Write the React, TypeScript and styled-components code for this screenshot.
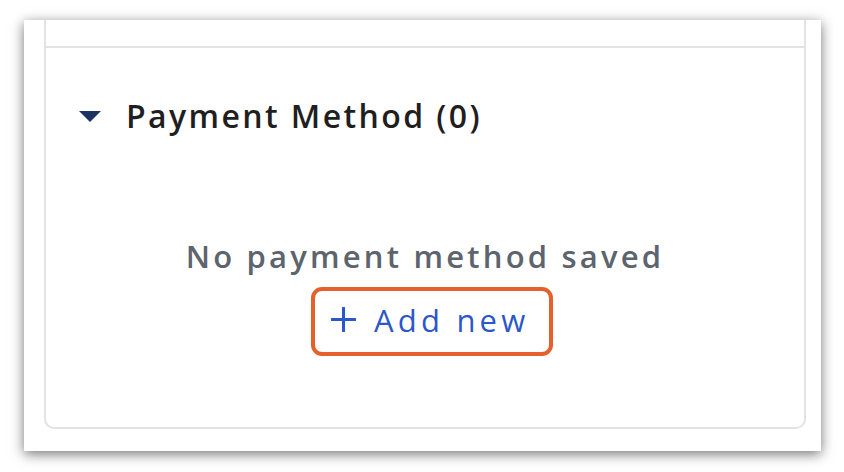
import React from "react";
import styled, { createGlobalStyle } from "styled-components";

const GlobalStyle = createGlobalStyle`
  html, body {
    margin: 0;
    padding: 0;
    background: #ffffff;
  }
  body {
    font-family: "Open Sans", "Noto Sans", sans-serif;
  }
`;

export default function App() {
  return (
    <>
      <GlobalStyle />
      <Page>
        <Frame>
          <Card>
            <PrevSection />
            <Section>
              <Header>
                <Caret viewBox="0 0 22 11" width={22} height={11}>
                  <path d="M0 0 L22 0 L11 11 Z" fill="#1b3360" />
                </Caret>
                <Title>Payment Method (0)</Title>
              </Header>
              <Empty>
                <EmptyText>No payment method saved</EmptyText>
                <AddButton type="button">
                  <svg width="25" height="25" viewBox="0 0 25 25">
                    <path
                      d="M12.5 1 V24 M1 12.5 H24"
                      stroke="#2b57c9"
                      strokeWidth="3"
                      strokeLinecap="round"
                    />
                  </svg>
                  <span>Add new</span>
                </AddButton>
              </Empty>
            </Section>
          </Card>
        </Frame>
      </Page>
    </>
  );
}

const Page = styled.div`
  padding: 20px 23px 21px 24px;
`;

const Frame = styled.div`
  width: 797px;
  height: 431px;
  background: #ffffff;
  box-shadow: 0 3px 12px rgba(0, 0, 0, 0.55);
  padding: 0 15px 22px 20px;
  box-sizing: border-box;
  display: flex;
  flex-direction: column;
`;

const Card = styled.div`
  flex: 1;
  border: 2px solid #e3e3e7;
  border-top: none;
  border-radius: 0 0 10px 10px;
  display: flex;
  flex-direction: column;
`;

const PrevSection = styled.div`
  height: 26px;
  border-bottom: 2px solid #e3e3e7;
`;

const Section = styled.div`
  padding: 46px 0 0 33px;
  display: flex;
  flex-direction: column;
`;

const Header = styled.div`
  display: flex;
  align-items: center;
  gap: 25px;
  height: 42px;
`;

const Caret = styled.svg`
  flex-shrink: 0;
  margin-top: 2px;
`;

const Title = styled.h2`
  margin: 0;
  font-size: 32px;
  font-weight: 600;
  color: #1f1f22;
  letter-spacing: 2.4px;
`;

const Empty = styled.div`
  display: flex;
  flex-direction: column;
  align-items: center;
  margin: 100px 0 0 -33px;
`;

const EmptyText = styled.p`
  margin: 0;
  font-size: 31px;
  font-weight: 600;
  color: #5d646d;
  letter-spacing: 3.2px;
  line-height: 40px;
`;

const AddButton = styled.button`
  margin: 11px 0 0 14px;
  display: flex;
  align-items: center;
  gap: 18px;
  width: 242px;
  height: 69px;
  box-sizing: border-box;
  padding: 0 0 4px 16px;
  border: 4px solid #e5602c;
  border-radius: 11px;
  background: #ffffff;
  font-family: "Open Sans", "Noto Sans", sans-serif;
  font-size: 31px;
  font-weight: 500;
  color: #2b57c9;
  letter-spacing: 4.2px;
  white-space: nowrap;
`;
